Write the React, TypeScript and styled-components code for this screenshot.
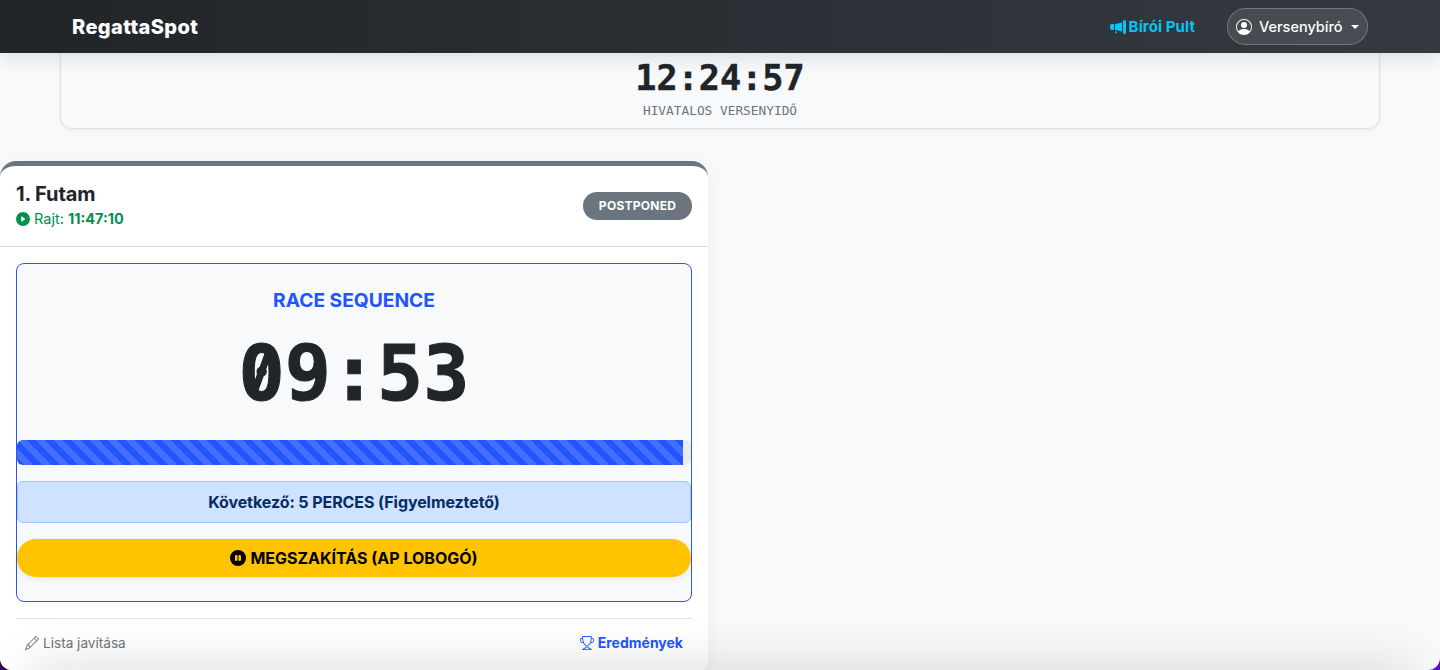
import React from "react";
import styled, { createGlobalStyle } from "styled-components";

const Global = createGlobalStyle`
  html, body { margin: 0; padding: 0; height: 100%; background: linear-gradient(90deg, #2d0a5e, #5a10c0); }
  body { font-family: Inter, "Liberation Sans", sans-serif; overflow: hidden; }
  * { box-sizing: border-box; }
`;

const Page = styled.div`
  position: relative;
  width: 1440px;
  height: 670px;
  background: #f8f9fa;
  border-radius: 0 0 12px 12px;
  overflow: hidden;
`;
const Navbar = styled.header`
  position: relative;
  z-index: 2;
  height: 53px;
  display: flex;
  align-items: center;
  padding: 0 72px;
  background: linear-gradient(90deg, #212529, #343a40);
  box-shadow: 0 4px 20px rgba(0, 0, 0, 0.12);
`;
const Brand = styled.div`
  font-size: 20px;
  font-weight: 800;
  letter-spacing: 0.4px;
  color: #fff;
  flex: 1;
`;
const PultLink = styled.div`
  display: flex;
  align-items: center;
  gap: 3px;
  font-size: 15px;
  font-weight: 700;
  letter-spacing: 0.1px;
  color: #00c8f5;
  margin-right: 32px;
`;
const UserButton = styled.div`
  width: 141px;
  height: 37px;
  display: flex;
  align-items: center;
  padding: 0 8px;
  gap: 7px;
  border: 1px solid rgba(255, 255, 255, 0.25);
  border-radius: 19px;
  background: rgba(255, 255, 255, 0.1);
  color: #fff;
  font-size: 14.5px;
  font-weight: 500;
`;
const Caret = styled.span`
  width: 0;
  height: 0;
  margin-left: 1px;
  border-top: 4px solid #fff;
  border-left: 4px solid transparent;
  border-right: 4px solid transparent;
`;
const ClockCard = styled.section`
  margin: 0 60px;
  height: 76px;
  background: #f8f9fa;
  border: 1px solid #dee2e6;
  border-top: 0;
  border-radius: 0 0 12px 12px;
  box-shadow: 0 2px 4px rgba(0, 0, 0, 0.05);
  display: flex;
  flex-direction: column;
  align-items: center;
`;
const ClockTime = styled.div`
  font-family: "DejaVu Sans Mono", monospace;
  font-weight: 700;
  font-size: 35.2px;
  line-height: 50px;
  color: #212529;
  -webkit-text-stroke: 0.4px #212529;
`;
const ClockLabel = styled.div`
  font-family: "DejaVu Sans Mono", monospace;
  font-size: 12.8px;
  line-height: 15px;
  color: #6c757d;
`;
const RaceCard = styled.article`
  margin-top: 32px;
  width: 708px;
  height: 514px;
  background: #fff;
  border-top: 5px solid #6c757d;
  border-radius: 16px;
  padding: 0 16px;
  box-shadow: 0 4px 20px rgba(0, 0, 0, 0.05);
`;
const CardHeader = styled.div`
  margin: 0 -16px;
  padding: 0 16px;
  height: 81px;
  border-bottom: 1px solid #d9d9d9;
  display: flex;
  align-items: center;
  justify-content: space-between;
`;
const HeadTitle = styled.div`
  font-size: 20px;
  font-weight: 700;
  letter-spacing: -0.1px;
  line-height: 24px;
  color: #212529;
  margin-top: -2px;
  margin-bottom: 3px;
`;
const StartLine = styled.div`
  display: flex;
  align-items: center;
  gap: 4px;
  font-size: 14.5px;
  line-height: 20px;
  color: #00914f;
`;
const StartTime = styled.b`
  font-weight: 700;
`;
const StatusPill = styled.div`
  width: 109px;
  height: 28px;
  border-radius: 14px;
  background: #6c757d;
  color: #fff;
  font-size: 12px;
  font-weight: 700;
  letter-spacing: 0.25px;
  padding-bottom: 1px;
  display: flex;
  align-items: center;
  justify-content: center;
`;
const Sequence = styled.div`
  margin-top: 16px;
  height: 339px;
  border: 1px solid #2b55e6;
  border-radius: 8px;
  background: #f8f9fa;
  display: flex;
  flex-direction: column;
`;
const SeqTitle = styled.div`
  margin-top: 24px;
  text-align: center;
  font-size: 19.2px;
  line-height: 24px;
  font-weight: 700;
  color: #2255ff;
`;
const BigTime = styled.div`
  margin-top: 17px;
  text-align: center;
  font-family: "DejaVu Sans Mono", monospace;
  font-weight: 700;
  font-size: 76.8px;
  line-height: 90px;
  color: #212529;
  -webkit-text-stroke: 1px #212529;
`;
const SlashedZero = styled.span`
  position: relative;
  &::after {
    content: "";
    position: absolute;
    left: 50%;
    top: 50%;
    width: 7px;
    height: 42px;
    margin: -22.5px 0 0 -3.5px;
    background: #212529;
    transform: rotate(20deg);
  }
`;
const Track = styled.div`
  margin-top: 21px;
  height: 25px;
  background: #e9ecef;
  border-radius: 6px;
  overflow: hidden;
`;
const Fill = styled.div`
  height: 100%;
  background-color: #2255ff;
  background-image: linear-gradient(
    45deg,
    rgba(255, 255, 255, 0.15) 25%,
    transparent 25%,
    transparent 50%,
    rgba(255, 255, 255, 0.15) 50%,
    rgba(255, 255, 255, 0.15) 75%,
    transparent 75%,
    transparent
  );
  background-size: 18px 18px;
`;
const NextBox = styled.div`
  margin-top: 16px;
  height: 42px;
  background: #cfe2ff;
  border: 1px solid #9ec5fe;
  border-radius: 6px;
  display: flex;
  align-items: center;
  justify-content: center;
  font-size: 16px;
  font-weight: 700;
  letter-spacing: -0.08px;
  color: #052c65;
`;
const AbortButton = styled.div`
  margin-top: 16px;
  height: 38px;
  border-radius: 19px;
  background: #ffc300;
  box-shadow: 0 2px 6px rgba(0, 0, 0, 0.08);
  display: flex;
  align-items: center;
  justify-content: center;
  gap: 4px;
  font-size: 16px;
  font-weight: 700;
  color: #000;
`;
const Footer = styled.div`
  margin-top: 16px;
  height: 48px;
  border-top: 1px solid #dee2e6;
  padding: 0 9px;
  display: flex;
  align-items: center;
  justify-content: space-between;
`;
const FooterLink = styled.div<{ $primary?: boolean }>`
  display: flex;
  align-items: center;
  gap: 4px;
  font-size: ${(p) => (p.$primary ? 14 : 13.6)}px;
  font-weight: ${(p) => (p.$primary ? 700 : 400)};
  color: ${(p) => (p.$primary ? "#2255ff" : "#6c757d")};
`;
const BottomShade = styled.div`
  position: absolute;
  left: 30px;
  right: 30px;
  bottom: -30px;
  height: 30px;
  pointer-events: none;
  box-shadow: 0 0 50px rgba(0, 0, 0, 0.18);
`;

const Megaphone = () => (
  <svg width="16" height="16" viewBox="0 0 16 16" fill="currentColor">
    <path d="M13 2.5a1.5 1.5 0 0 1 3 0v11a1.5 1.5 0 0 1-3 0zm-1 .724c-2.067.95-4.539 1.481-7 1.656v6.237a25 25 0 0 1 1.088.085c2.053.204 4.038.668 5.912 1.56zm-8 7.841V4.934c-.68.027-1.399.043-2.008.053A2.02 2.02 0 0 0 0 7v2c0 1.106.896 1.996 1.994 2.009l.496.008a64 64 0 0 1 1.51.048m1.39 1.081q.428.032.85.078l.253.023.27 1.08c.12.48-.24.95-.736.95h-.3a.76.76 0 0 1-.72-.52z" />
  </svg>
);
const UserCircle = () => (
  <svg width="16" height="16" viewBox="0 0 16 16" fill="currentColor">
    <path d="M11 6a3 3 0 1 1-6 0 3 3 0 0 1 6 0" />
    <path fillRule="evenodd" d="M0 8a8 8 0 1 1 16 0A8 8 0 0 1 0 8m8-7a7 7 0 0 0-5.468 11.37C3.242 11.226 4.805 10 8 10s4.757 1.225 5.468 2.37A7 7 0 0 0 8 1" />
  </svg>
);
const PlayCircle = () => (
  <svg width="14" height="14" viewBox="0 0 16 16" fill="currentColor">
    <path d="M16 8A8 8 0 1 1 0 8a8 8 0 0 1 16 0M6.79 5.093A.5.5 0 0 0 6 5.5v5a.5.5 0 0 0 .79.407l3.5-2.5a.5.5 0 0 0 0-.814z" />
  </svg>
);
const PauseCircle = () => (
  <svg width="16" height="16" viewBox="0 0 16 16" fill="currentColor">
    <path d="M16 8A8 8 0 1 1 0 8a8 8 0 0 1 16 0M6.25 5C5.56 5 5 5.56 5 6.25v3.5a1.25 1.25 0 1 0 2.5 0v-3.5C7.5 5.56 6.94 5 6.25 5m3.5 0c-.69 0-1.25.56-1.25 1.25v3.5a1.25 1.25 0 1 0 2.5 0v-3.5C11 5.56 10.44 5 9.75 5" />
  </svg>
);
const Pencil = () => (
  <svg width="14" height="14" viewBox="0 0 16 16" fill="currentColor">
    <path d="M12.146.146a.5.5 0 0 1 .708 0l3 3a.5.5 0 0 1 0 .708l-10 10a.5.5 0 0 1-.168.11l-5 2a.5.5 0 0 1-.65-.65l2-5a.5.5 0 0 1 .11-.168zM11.207 2.5 13.5 4.793 14.793 3.5 12.5 1.207zm1.586 3L10.5 3.207 4 9.707V10h.5a.5.5 0 0 1 .5.5v.5h.5a.5.5 0 0 1 .5.5v.5h.293zm-9.761 5.175-.106.106-1.528 3.821 3.821-1.528.106-.106A.5.5 0 0 1 5 12.5V12h-.5a.5.5 0 0 1-.5-.5V11h-.5a.5.5 0 0 1-.468-.325" />
  </svg>
);
const Trophy = () => (
  <svg width="14" height="14" viewBox="0 0 16 16" fill="currentColor">
    <path d="M2.5.5A.5.5 0 0 1 3 0h10a.5.5 0 0 1 .5.5q0 .807-.034 1.536a3 3 0 1 1-1.133 5.89c-.79 1.865-1.878 2.777-2.833 3.011v2.173l1.425.356c.194.048.377.135.537.255L13.3 15.1a.5.5 0 0 1-.3.9H3a.5.5 0 0 1-.3-.9l1.838-1.379c.16-.12.343-.207.537-.255L6.5 13.11v-2.173c-.955-.234-2.043-1.146-2.833-3.012a3 3 0 1 1-1.132-5.89A33 33 0 0 1 2.5.5m.099 2.54a2 2 0 0 0 .72 3.935c-.333-1.05-.588-2.346-.72-3.935m10.083 3.935a2 2 0 0 0 .72-3.935c-.133 1.59-.388 2.885-.72 3.935M3.504 1q.01.775.056 1.469c.13 2.028.457 3.546.87 4.667C5.294 9.48 6.484 10 7 10a.5.5 0 0 1 .5.5v2.61a1 1 0 0 1-.757.97l-1.426.356a.5.5 0 0 0-.179.085L4.5 15h7l-.638-.479a.5.5 0 0 0-.18-.085l-1.425-.356a1 1 0 0 1-.757-.97V10.5A.5.5 0 0 1 9 10c.516 0 1.706-.52 2.57-2.864.413-1.12.74-2.64.87-4.667q.046-.694.056-1.469z" />
  </svg>
);

export default function App() {
  return (
    <>
      <Global />
      <Page>
        <Navbar>
          <Brand>RegattaSpot</Brand>
          <PultLink>
            <Megaphone />
            Bírói Pult
          </PultLink>
          <UserButton>
            <UserCircle />
            Versenybíró
            <Caret />
          </UserButton>
        </Navbar>
        <ClockCard>
          <ClockTime>12:24:57</ClockTime>
          <ClockLabel>HIVATALOS VERSENYIDŐ</ClockLabel>
        </ClockCard>
        <RaceCard>
          <CardHeader>
            <div>
              <HeadTitle>1. Futam</HeadTitle>
              <StartLine>
                <PlayCircle />
                <span>
                  Rajt: <StartTime>11:47:10</StartTime>
                </span>
              </StartLine>
            </div>
            <StatusPill>POSTPONED</StatusPill>
          </CardHeader>
          <Sequence>
            <SeqTitle>RACE SEQUENCE</SeqTitle>
            <BigTime>
              <SlashedZero>0</SlashedZero>9:53
            </BigTime>
            <Track>
              <Fill style={{ width: `${(666 / 674) * 100}%` }} />
            </Track>
            <NextBox>Következő: 5 PERCES (Figyelmeztető)</NextBox>
            <AbortButton>
              <PauseCircle />
              MEGSZAKÍTÁS (AP LOBOGÓ)
            </AbortButton>
          </Sequence>
          <Footer>
            <FooterLink>
              <Pencil />
              Lista javítása
            </FooterLink>
            <FooterLink $primary>
              <Trophy />
              Eredmények
            </FooterLink>
          </Footer>
        </RaceCard>
        <BottomShade />
      </Page>
    </>
  );
}
